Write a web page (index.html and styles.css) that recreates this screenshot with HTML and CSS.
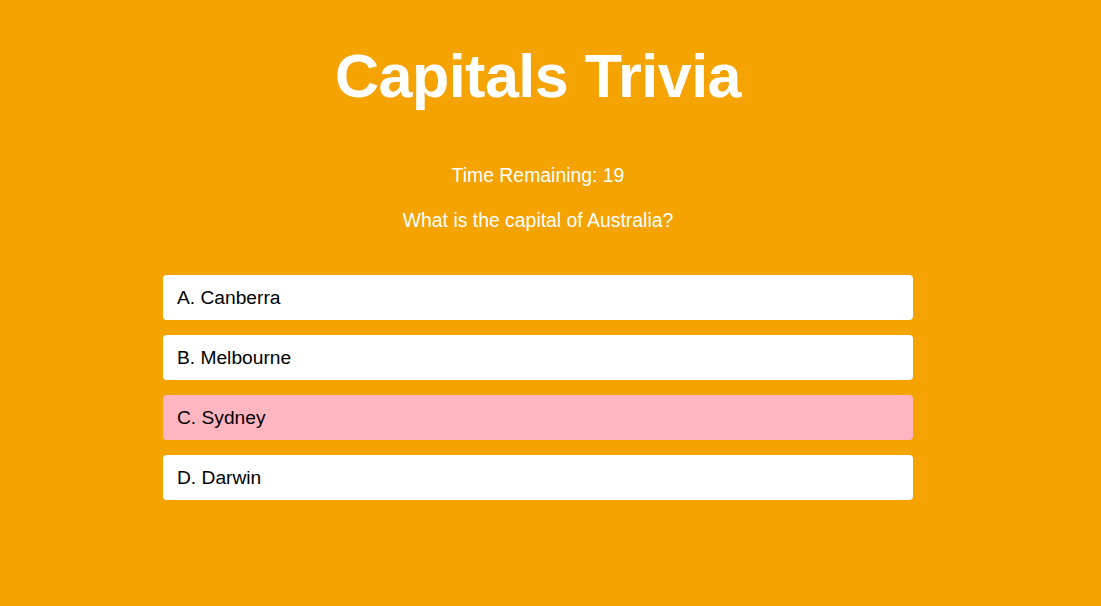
FILE: index.html
```html
<!DOCTYPE html>
<html lang="en">
<head>
<meta charset="utf-8">
<title>Capitals Trivia</title>
<link rel="stylesheet" href="styles.css">
</head>
<body>
<main class="page">
  <h1 class="title">Capitals Trivia</h1>
  <p class="timer">Time Remaining: 19</p>
  <p class="question">What is the capital of Australia?</p>
  <div class="answers">
    <button class="answer">A. Canberra</button>
    <button class="answer">B. Melbourne</button>
    <button class="answer answer--selected">C. Sydney</button>
    <button class="answer">D. Darwin</button>
  </div>
</main>
</body>
</html>
```
FILE: styles.css
```css
html, body {
  margin: 0;
  padding: 0;
  background: #f4a300;
  height: 100%;
}
body {
  font-family: "Liberation Sans", Arial, sans-serif;
  color: #fff;
  padding-right: 25px;
  overflow: hidden;
}
.page {
  display: flex;
  flex-direction: column;
  align-items: center;
  padding-top: 36px;
}
.title {
  margin: 0;
  font-size: 61px;
  font-weight: bold;
  line-height: 80px;
  letter-spacing: -0.5px;
}
.timer {
  margin: 46px 0 0;
  font-size: 19.4px;
  line-height: 26px;
}
.question {
  margin: 19px 0 0;
  font-size: 19.4px;
  line-height: 26px;
}
.answers {
  margin-top: 42px;
  width: 750px;
  display: flex;
  flex-direction: column;
  gap: 15px;
}
.answer {
  display: block;
  width: 100%;
  height: 45px;
  border: none;
  border-radius: 4px;
  background: #fff;
  color: #000;
  text-align: left;
  padding: 0 14px;
  font-family: "Liberation Sans", Arial, sans-serif;
  font-size: 19.2px;
}
.answer--selected {
  background: #ffb6c1;
}
```
